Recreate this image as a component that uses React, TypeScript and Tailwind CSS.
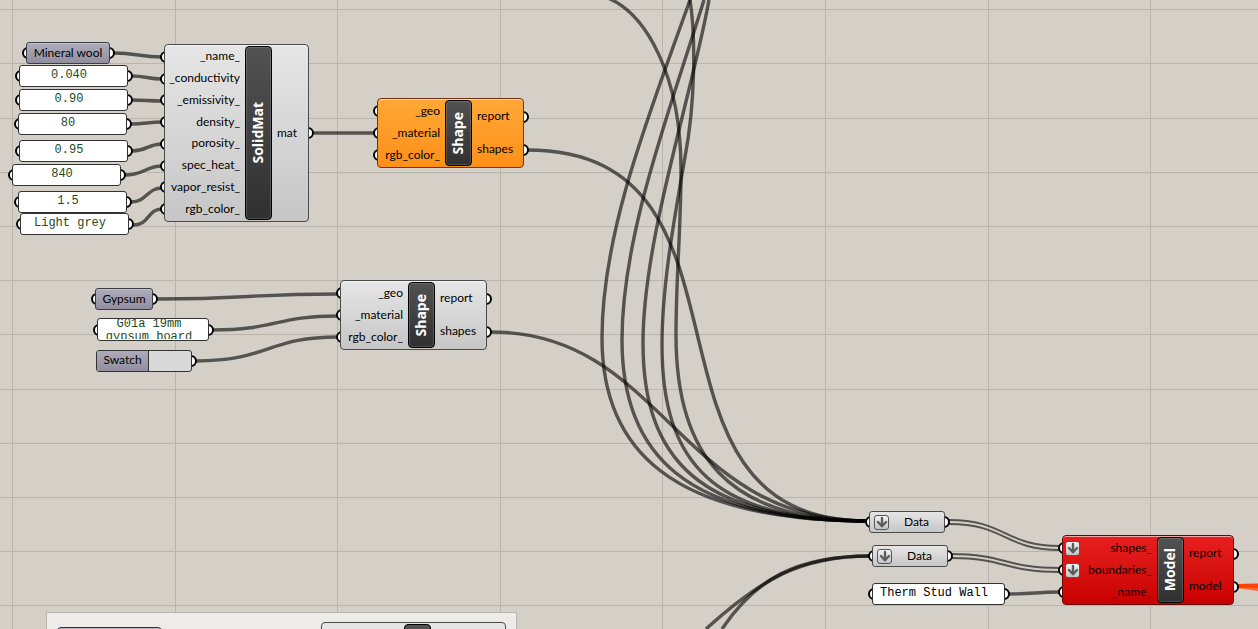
import React from 'react';
import { ArrowDown } from 'lucide-react';
import clsx from 'clsx';

type Tone = 'grey' | 'orange' | 'red';

const tones: Record<Tone, string> = {
  grey: 'border-[#4a4a4a] bg-linear-to-b from-[#e6e6e6] to-[#c6c6c6]',
  orange: 'border-[#7a3010] bg-linear-to-b from-[#ffa836] to-[#ff8f16]',
  red: 'border-[#6a0505] bg-linear-to-b from-[#e81e1e] to-[#c80000]',
};

const columns = [12, 175, 337, 500, 662, 825, 988, 1150];
const rows = [9, 63, 118, 172, 226, 280, 334, 389, 443, 497, 551, 605];

// Wires that run into single inputs
const wires = [
  'M114 53 C136 53 140 57 162 57',
  'M132 76 C146 76 148 79 162 79',
  'M132 100 C146 100 148 101 162 101',
  'M131 124 C145 124 148 122 162 122',
  'M132 151 C147 151 148 144 162 144',
  'M125 175 C144 175 146 166 162 166',
  'M131 202 C147 202 147 188 162 188',
  'M133 225 C150 225 147 209 162 209',
  'M313 133 H374',
  'M157 299 C248 299 248 294 338 294',
  'M212 330 C276 330 276 316 338 316',
  'M196 361 C268 361 268 337 338 337',
  'M1009 594 C1034 594 1036 592 1060 592',
];

// Wires merging into the shape list
const shapeWires = [
  'M527 150 C779 150 616 521 868 521',
  'M491 332 C664 332 678 521 868 521',
  'M690 0 C651 110 602 230 602 338 C602 448 669 521 868 521',
  'M704 0 C670 110 622 235 622 340 C622 452 682 521 868 521',
  'M709 0 C692 95 643 240 643 343 C643 458 698 521 868 521',
  'M690 0 C696 38 695 105 685 157 C677 205 662 280 662 345 C662 463 713 521 868 521',
  'M608 -2 C646 14 681 75 681 170 C681 230 676 275 676 335 C676 455 727 521 868 521',
];

const boundaryWires = [
  'M870 556 C800 556 760 580 706 629',
  'M870 556 C795 556 755 580 722 629',
];

const listWires = [
  'M949 520 C1006 520 1004 546 1060 546',
  'M949 524 C1006 524 1004 550 1060 550',
  'M951 554 C1006 554 1004 568 1060 568',
  'M951 558 C1006 558 1004 572 1060 572',
];

function Wires() {
  return (
    <svg className="absolute inset-0 h-full w-full" fill="none" aria-hidden="true">
      <g stroke="#000" strokeOpacity={0.6} strokeWidth={3.4}>
        {[...wires, ...shapeWires, ...boundaryWires].map((d) => (
          <path key={d} d={d} />
        ))}
      </g>
      <g stroke="#000" strokeOpacity={0.6} strokeWidth={2}>
        {listWires.map((d) => (
          <path key={d} d={d} />
        ))}
      </g>
      <path d="M1236 584 L1400 581 V611 L1236 588 Z" fill="#ff6a35" />
      <path d="M1236 586 L1400 584" stroke="#ff4206" strokeWidth={4} />
    </svg>
  );
}

function Grid() {
  return (
    <svg className="absolute inset-0 h-full w-full" stroke="#b9b5ad" aria-hidden="true">
      {columns.map((x) => (
        <line key={x} x1={x + 0.5} x2={x + 0.5} y1="0" y2="100%" />
      ))}
      {rows.map((y) => (
        <line key={y} y1={y + 0.5} y2={y + 0.5} x1="0" x2="100%" />
      ))}
    </svg>
  );
}

function Port({ side }: { side: 'left' | 'right' }) {
  return (
    <span
      className={clsx(
        'absolute top-1/2 -z-10 h-3 w-3 -translate-y-1/2 rounded-full border-2 border-black bg-white',
        side === 'left' ? '-left-1' : '-right-[5px]',
      )}
    />
  );
}

function Flatten() {
  return (
    <span className="flex h-[15px] w-[15px] shrink-0 items-center justify-center rounded-[3px] border border-[#555] bg-linear-to-b from-[#f2f2f2] to-[#c4c4c4]">
      <ArrowDown size={14} strokeWidth={4} className="shrink-0 text-[#5c5c5c]" />
    </span>
  );
}

interface ComponentNodeProps {
  name: string;
  tone?: Tone;
  inputs: string[];
  outputs: string[];
  flattened?: string[];
  outputWidth: string;
  className: string;
}

function ComponentNode({
  name,
  tone = 'grey',
  inputs,
  outputs,
  flattened = [],
  outputWidth,
  className,
}: ComponentNodeProps) {
  return (
    <section aria-label={name} className={clsx('absolute isolate flex', className)}>
      <div
        className={clsx(
          'absolute inset-0 -z-5 rounded-sm border shadow-[inset_0_1px_0_rgba(255,255,255,0.6)]',
          tones[tone],
        )}
      />
      <ul className="flex flex-1 flex-col py-[2px]">
        {inputs.map((input) => (
          <li key={input} className="relative flex flex-1 items-center pr-[5px] pl-[3px]">
            <Port side="left" />
            {flattened.includes(input) && <Flatten />}
            <span className="ml-auto pb-[1px]">{input}</span>
          </li>
        ))}
      </ul>
      <div className="my-[2px] flex w-[27px] items-center justify-center rounded-sm border border-black bg-linear-to-b from-[#525252] to-[#303030] shadow-[inset_0_0_0_1px_rgba(255,255,255,0.15)]">
        <h2 className="rotate-180 pl-[1px] font-['Open_Sans',sans-serif] text-[14px] leading-4 font-bold text-white [writing-mode:vertical-rl]">
          {name}
        </h2>
      </div>
      <ul className={clsx('flex flex-col py-[2px]', outputWidth)}>
        {outputs.map((output) => (
          <li key={output} className="relative flex flex-1 items-center pl-[5px]">
            <span className="pb-[1px]">{output}</span>
            <Port side="right" />
          </li>
        ))}
      </ul>
    </section>
  );
}

function Panel({ label, value, className }: { label: string; value: string; className: string }) {
  return (
    <div className={clsx('absolute isolate h-[22px]', className)}>
      <Port side="left" />
      <Port side="right" />
      <input
        aria-label={label}
        defaultValue={value}
        className="block h-full w-full rounded-[3px] border border-[#333] bg-white pr-4 pb-[2px] pl-[7px] font-['Liberation_Mono',monospace] text-[12px] outline-none [text-align:inherit]"
      />
    </div>
  );
}

function ParamNode({ label, className }: { label: string; className: string }) {
  return (
    <div className={clsx('absolute isolate h-[22px]', className)}>
      <Port side="left" />
      <Port side="right" />
      <div className="flex h-full items-center justify-center rounded-[3px] border border-[#3c3c46] bg-linear-to-b from-[#aeacba] to-[#918f9f] pb-[1px] shadow-[inset_0_1px_0_rgba(255,255,255,0.3)]">
        {label}
      </div>
    </div>
  );
}

function DataNode({ className }: { className: string }) {
  return (
    <div className={clsx('absolute isolate h-[22px] w-[76px]', className)}>
      <Port side="left" />
      <Port side="right" />
      <div className={clsx('flex h-full items-center rounded-[3px] border px-1', tones.grey)}>
        <Flatten />
        <span className="flex-1 pb-[1px] pl-1 text-center">Data</span>
      </div>
    </div>
  );
}

const materialPanels = [
  { label: 'Conductivity', value: '0.040', className: 'left-[19px] top-[65px] w-[109px] text-center text-[#234a23]' },
  { label: 'Emissivity', value: '0.90', className: 'left-[19px] top-[89px] w-[109px] text-center text-[#234a23]' },
  { label: 'Density', value: '80', className: 'left-[18px] top-[113px] w-[109px] text-center text-[#234a23]' },
  { label: 'Porosity', value: '0.95', className: 'left-[19px] top-[140px] w-[109px] text-center text-[#234a23]' },
  { label: 'Specific heat', value: '840', className: 'left-[12px] top-[164px] w-[109px] text-center text-[#234a23]' },
  { label: 'Vapor resistance', value: '1.5', className: 'left-[18px] top-[191px] w-[109px] text-center text-[#234a23]' },
  { label: 'Color', value: 'Light grey', className: 'left-[20px] top-[213px] w-[109px] text-center text-[#234a23]' },
];

function App() {
  return (
    <main className="relative h-screen w-full overflow-hidden bg-[#d4cfc7] font-[Lato,sans-serif] text-[12px] leading-4 text-black">
      <Grid />

      {/* Group frame */}
      <div className="absolute top-[612px] left-[46px] h-40 w-[471px] border border-[#b9b6b0] bg-[#edece8] pt-[9px] pr-[10px] pl-[10px]">
        <div className="flex items-start justify-between">
          <div className="mt-[5px] h-[22px] w-[105px] rounded-sm border border-[#333] bg-[#b5b3c4]" />
          <div className="flex h-20 w-[185px] justify-center rounded-sm border border-[#4a4a4a] bg-[#e6e6e6] pt-[1px] pl-2">
            <div className="h-16 w-[27px] rounded-sm border border-black bg-[#525252]" />
          </div>
        </div>
      </div>

      <Wires />

      <ParamNode label="Mineral wool" className="top-[42px] left-[26px] w-[84px]" />
      {materialPanels.map((panel) => (
        <Panel key={panel.label} {...panel} />
      ))}
      <ComponentNode
        name="SolidMat"
        inputs={['_name_', '_conductivity', '_emissivity_', 'density_', 'porosity_', 'spec_heat_', 'vapor_resist_', 'rgb_color_']}
        outputs={['mat']}
        outputWidth="w-[37px]"
        className="top-[44px] left-[164px] h-[178px] w-[145px]"
      />
      <ComponentNode
        name="Shape"
        tone="orange"
        inputs={['_geo', '_material', 'rgb_color_']}
        outputs={['report', 'shapes']}
        outputWidth="w-[52px]"
        className="top-[98px] left-[377px] h-[70px] w-[147px]"
      />

      <ParamNode label="Gypsum" className="top-[288px] left-[95px] w-[58px]" />
      <div className="absolute top-[318px] left-[97px] isolate h-[23px] w-[112px]">
        <Port side="left" />
        <Port side="right" />
        <div className="h-full overflow-hidden rounded-[3px] border border-[#333] bg-white pr-3 pb-[2px] pl-1">
          <textarea
            aria-label="Gypsum material"
            defaultValue={'G01a 19mm\ngypsum board'}
            className="-mt-[1px] block h-[21px] w-full resize-none overflow-hidden text-center font-['Liberation_Mono',monospace] text-[12px] leading-[13px] text-[#234a23] outline-none"
          />
        </div>
      </div>
      <div className="absolute top-[350px] left-[96px] isolate h-[22px] w-[96px]">
        <Port side="right" />
        <div className="flex h-full overflow-hidden rounded-[3px] border border-[#333] bg-[#d9d9d9]">
          <span className="w-[52px] border-r border-[#333] bg-linear-to-b from-[#aeacba] to-[#918f9f] pt-[1px] text-center">
            Swatch
          </span>
        </div>
      </div>
      <ComponentNode
        name="Shape"
        inputs={['_geo', '_material', 'rgb_color_']}
        outputs={['report', 'shapes']}
        outputWidth="w-[52px]"
        className="top-[280px] left-[340px] h-[70px] w-[147px]"
      />

      <DataNode className="top-[511px] left-[869px]" />
      <DataNode className="top-[545px] left-[872px]" />
      <Panel label="Model name" value="Therm Stud Wall" className="top-[583px] left-[872px] w-[133px] text-left" />
      <ComponentNode
        name="Model"
        tone="red"
        inputs={['shapes_', 'boundaries_', '_name_']}
        outputs={['report', 'model']}
        flattened={['shapes_', 'boundaries_']}
        outputWidth="w-[50px]"
        className="top-[535px] left-[1062px] h-[70px] w-[172px]"
      />
    </main>
  );
}

export default App;
